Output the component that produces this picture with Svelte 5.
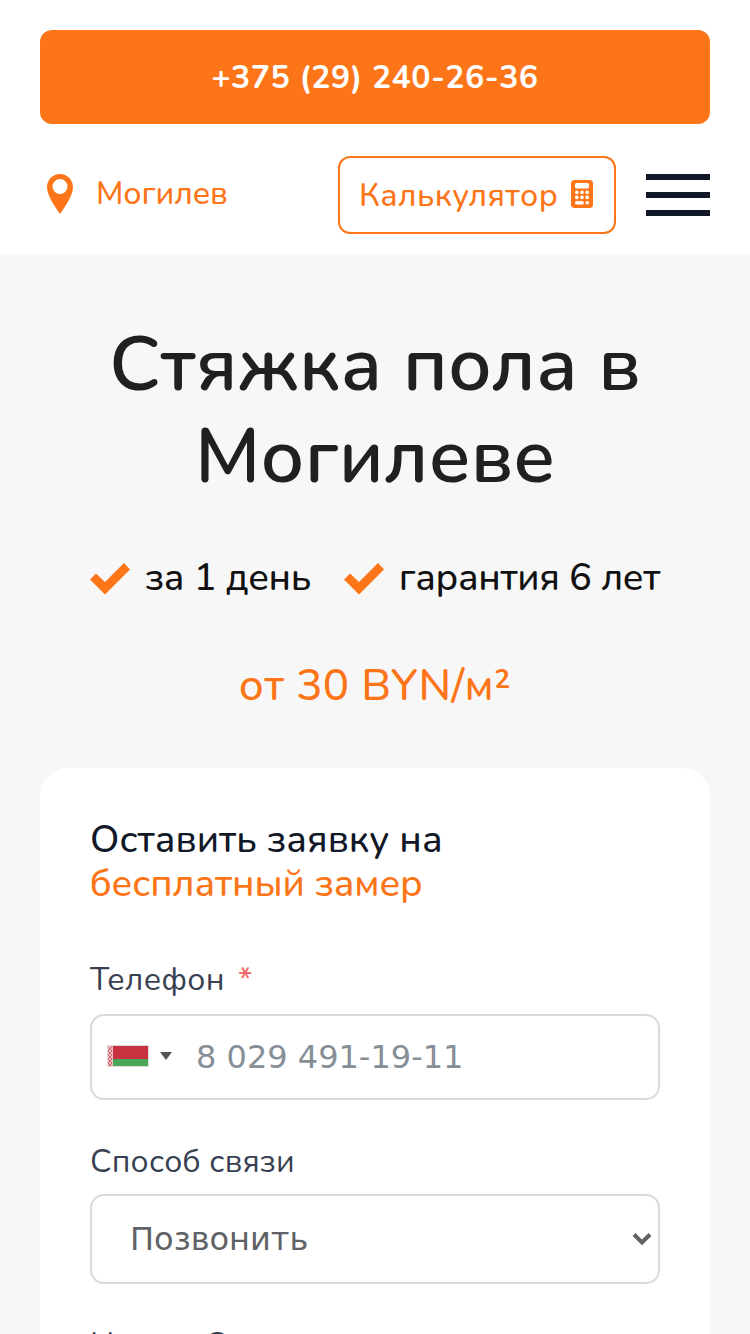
<script lang="ts">
  let phone = $state("");
  let contact = $state("Позвонить");
</script>

<div class="page">
  <header class="header">
    <a class="phone-btn" href="tel:+375292402636"><span>+375 (29) 240-26-36</span></a>
    <div class="nav">
      <a class="city" href="#city">
        <svg class="pin" viewBox="0 0 26 40">
          <path fill-rule="evenodd" d="M13 0C5.700 0 0 5.700 0 13c0 8 6.500 17.500 13 27 6.500-9.500 13-19 13-27C26 5.700 20.300 0 13 0Zm0 5a7.500 7.500 0 1 1 0 15 7.500 7.500 0 0 1 0-15Z" />
        </svg>
        <span>Могилев</span>
      </a>
      <a class="calc" href="#calc">
        <span>Калькулятор</span>
        <svg class="calc-icon" viewBox="0 0 22 28">
          <rect width="22" height="28" rx="3.500" />
          <g fill="#fff">
            <rect x="4" y="3" width="14" height="5.500" rx="1.500" />
            <circle cx="5.800" cy="12.400" r="1.800" /><circle cx="11" cy="12.400" r="1.800" /><circle cx="16.200" cy="12.400" r="1.800" />
            <circle cx="5.800" cy="17.400" r="1.800" /><circle cx="11" cy="17.400" r="1.800" /><circle cx="16.200" cy="17.400" r="1.800" />
            <rect x="4" y="21.100" width="8.800" height="3.500" rx="1.700" />
            <circle cx="16.200" cy="22.800" r="1.800" />
          </g>
        </svg>
      </a>
      <button class="burger" aria-label="Меню"><i></i><i></i><i></i></button>
    </div>
  </header>

  <main class="hero">
    <h1>Стяжка пола в<br />Могилеве</h1>
    <ul class="features">
      {#each ["за 1 день", "гарантия 6 лет"] as feature}
        <li>
          <svg class="check" viewBox="0 0 40 32"><path d="M0 16.500 6 10.500l9 8.500L34 0l6 6.500L15 31.500Z" /></svg>
          <span>{feature}</span>
        </li>
      {/each}
    </ul>
    <p class="price">от 30 BYN/м²</p>

    <form class="card">
      <h2>Оставить заявку на<br /><span>бесплатный замер</span></h2>

      <label class="label required" for="phone">Телефон<b>*</b></label>
      <div class="field phone-field">
        <svg class="flag" viewBox="0 0 42 22">
          <rect width="42" height="22" fill="#ddd" />
          <path fill="#c8313e" d="M1 1h40v13H1z" />
          <path fill="#4aa657" d="M1 14h40v7H1z" />
          <path fill="#f0bfc4" d="M1 1h5v20H1z" />
          <path stroke="#d8646e" stroke-width="1" fill="none" d="m1 2 4 4-4 4 4 4-4 4 3 3M5 1 1 6l4 4-4 4 4 4-3 3" />
        </svg>
        <span class="arrow"></span>
        <input id="phone" type="tel" placeholder="8 029 491-19-11" bind:value={phone} />
      </div>

      <label class="label" for="contact">Способ связи</label>
      <div class="field select-field">
        <select id="contact" bind:value={contact}>
          <option>Позвонить</option>
          <option>Viber</option>
          <option>Telegram</option>
        </select>
        <svg class="chevron" viewBox="0 0 20 14"><path d="m2 2.500 8 8 8-8" /></svg>
      </div>

      <div class="label discount">Нужна Скидка</div>
    </form>
  </main>
</div>

<style>
  :global(body) {
    background: #f7f7f7;
    overflow: hidden;
  }

  .page {
    height: 1334px;
    overflow: hidden;
    font-family: Nunito, "Open Sans", "Noto Sans", sans-serif;
    font-weight: 500;
    color: #111827;
  }

  .page * { box-sizing: border-box; }

  a { color: inherit; text-decoration: none; }
  svg { flex: none; }

  .header {
    height: 254px;
    padding: 30px 40px 0;
    background: #fff;
    color: #fc7619;
    font-size: 32px;
  }

  .phone-btn {
    display: flex;
    align-items: center;
    justify-content: center;
    height: 94px;
    border-radius: 12px;
    background: #fc7619;
    color: #fff;
    font-weight: 700;
    letter-spacing: 0.5px;
  }

  .nav {
    display: flex;
    align-items: center;
    height: 78px;
    margin-top: 32px;
  }

  .city {
    display: flex;
    align-items: center;
    gap: 23px;
    margin-right: auto;
    padding: 0 0 3px 7px;
    letter-spacing: -0.1px;
  }

  .pin { width: 26px; height: 40px; fill: #fc7619; }

  .calc {
    display: flex;
    align-items: center;
    justify-content: space-between;
    width: 278px;
    height: 78px;
    padding: 0 21px 0 19px;
    border: 2px solid #fc7619;
    border-radius: 12px;
    letter-spacing: 0.42px;
  }

  .calc-icon { width: 22px; height: 28px; margin-bottom: 2px; fill: #fc7619; }

  .burger {
    display: flex;
    flex-direction: column;
    gap: 12px;
    width: 64px;
    margin-left: 30px;
    padding: 0;
    border: 0;
    background: none;
  }

  .burger i { height: 6px; background: #111827; }

  .hero { padding: 65px 40px 0; }

  h1 {
    margin: 0;
    color: #202020;
    font-size: 76px;
    font-weight: 600;
    line-height: 92px;
    letter-spacing: 0.25px;
    text-align: center;
  }

  .features {
    display: flex;
    justify-content: space-between;
    margin: 49px 0 0;
    padding: 0 50px;
    list-style: none;
    color: #111;
    font-size: 38px;
    line-height: 52px;
    letter-spacing: -0.33px;
  }

  .features li { display: flex; align-items: center; gap: 15px; }
  .check { width: 40px; height: 32px; margin-top: 2px; fill: #fc7619; }

  .price {
    margin: 52px 0 0;
    color: #fc7619;
    font-size: 44px;
    line-height: 60px;
    letter-spacing: 0.3px;
    text-align: center;
  }

  .card {
    height: 640px;
    margin-top: 52px;
    padding: 50px 50px 0;
    border-radius: 28px;
    background: #fff;
  }

  h2 {
    margin: 0 0 52px;
    font-size: 38px;
    font-weight: 500;
    line-height: 44px;
    letter-spacing: 0.1px;
  }

  h2 span { color: #fc7619; letter-spacing: -0.08px; }

  .label {
    display: block;
    height: 54px;
    color: #374151;
    font-size: 32px;
    font-weight: 400;
    line-height: 44px;
    letter-spacing: 0.2px;
  }

  .label.required { height: 56px; letter-spacing: 0.4px; }
  .label.discount { margin-top: -1px; word-spacing: 3px; }
  .label b { margin-left: 13px; color: #f56c6c; font-weight: 500; }

  .field {
    display: flex;
    align-items: center;
    border: 2px solid #dadada;
    border-radius: 14px;
  }

  .phone-field { height: 86px; margin-bottom: 40px; padding-left: 15px; }
  .flag { width: 42px; height: 22px; margin-bottom: 2px; }

  .arrow {
    margin: 0 24px 2px 11px;
    border: 6px solid transparent;
    border-top: 8px solid #555;
    border-bottom: 0;
  }

  input,
  select {
    flex: 1;
    min-width: 0;
    padding: 0;
    border: 0;
    outline: 0;
    background: none;
    font: 400 32px "DejaVu Sans", sans-serif;
  }

  input::placeholder { color: #868e96; opacity: 1; }

  .select-field { height: 90px; margin-bottom: 40px; padding: 0 6px 0 38px; }
  select { appearance: none; color: #606266; }

  .chevron {
    width: 20px;
    height: 14px;
    fill: none;
    stroke: #606266;
    stroke-width: 4;
  }
</style>
